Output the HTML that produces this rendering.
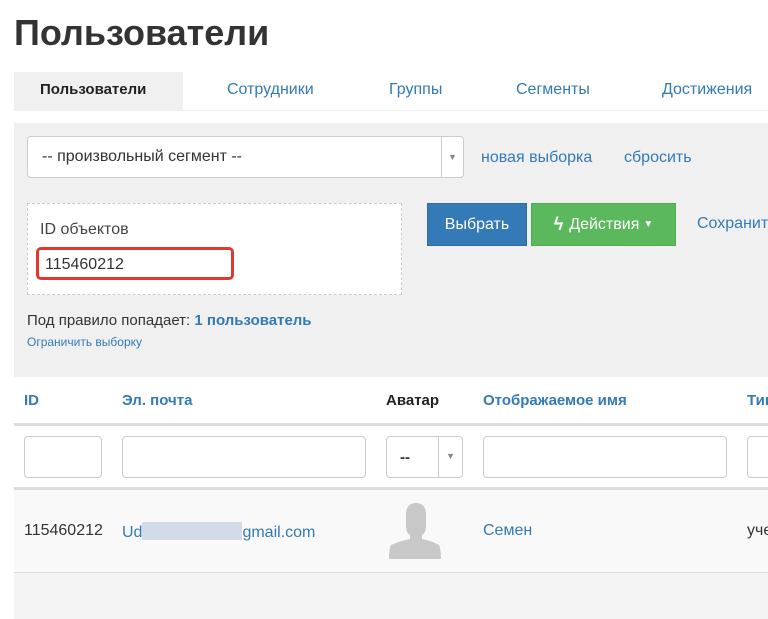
<!DOCTYPE html>
<html><head><meta charset="utf-8"><style>
*{box-sizing:border-box;margin:0;padding:0}
body{width:768px;height:619px;overflow:hidden;background:#fff;font-family:"Liberation Sans",sans-serif;color:#333;position:relative}
.a{position:absolute;white-space:nowrap}
.link{color:#337ab7}
.inp{position:absolute;background:#fff;border:1px solid #ccc;border-radius:4px}
.btn{position:absolute;display:flex;align-items:center;justify-content:center;color:#fff;font-size:16px}
</style></head><body>
<div class="a" style="left:14px;top:12px;font-size:36px;font-weight:bold;color:#333">Пользователи</div>
<div class="a" style="left:14px;top:72px;width:169px;height:38px;background:#f0f0f0"></div>
<div class="a" style="left:14px;top:110px;width:754px;height:1px;background:#eee"></div>
<div class="a" style="left:40px;top:81px;font-size:15px;font-weight:bold;color:#222">Пользователи</div>
<div class="a link" style="left:227px;top:81px;font-size:16px">Сотрудники</div>
<div class="a link" style="left:389px;top:81px;font-size:16px">Группы</div>
<div class="a link" style="left:516px;top:81px;font-size:16px">Сегменты</div>
<div class="a link" style="left:662px;top:81px;font-size:16px">Достижения</div>

<div class="a" style="left:14px;top:123px;width:754px;height:254px;background:#f0f0f0"></div>
<div class="inp" style="left:27px;top:136px;width:437px;height:42px"></div>
<div class="a" style="left:441px;top:137px;width:1px;height:40px;background:#ccc"></div>
<div class="a" style="left:448px;top:152px;font-size:9px;color:#888">▼</div>
<div class="a" style="left:42px;top:148px;font-size:16px;color:#333">-- произвольный сегмент --</div>
<div class="a link" style="left:481px;top:149px;font-size:16px">новая выборка</div>
<div class="a link" style="left:624px;top:149px;font-size:16px">сбросить</div>

<div class="a" style="left:27px;top:203px;width:375px;height:92px;background:#fff;border:1px dashed #ccc"></div>
<div class="a" style="left:40px;top:221px;font-size:16px;color:#444">ID объектов</div>
<div class="a" style="left:36px;top:247px;width:198px;height:33px;border:3px solid #e03a2f;border-radius:5px;background:#fff"></div>
<div class="a" style="left:45px;top:256px;font-size:16px;color:#333">115460212</div>

<div class="btn" style="left:427px;top:203px;width:100px;height:43px;background:#337ab7;border:1px solid #2e6da4">Выбрать</div>
<div class="btn" style="left:531px;top:203px;width:145px;height:43px;background:#5cb85c;border:1px solid #4cae4c"><b style="font-size:18px;margin-right:6px">ϟ</b>Действия <span style="font-size:10px;margin-left:4px">▼</span></div>
<div class="a link" style="left:697px;top:215px;font-size:16px">Сохранить</div>

<div class="a" style="left:27px;top:312px;font-size:15px;color:#333">Под правило попадает: <b class="link">1 пользователь</b></div>
<div class="a link" style="left:27px;top:335px;font-size:12px">Ограничить выборку</div>

<div class="a" style="left:14px;top:377px;width:754px;height:47px;background:#fff"></div>
<div class="a link" style="left:24px;top:392px;font-size:15px;font-weight:bold">ID</div>
<div class="a link" style="left:122px;top:392px;font-size:15px;font-weight:bold">Эл. почта</div>
<div class="a" style="left:386px;top:392px;font-size:15px;font-weight:bold;color:#222">Аватар</div>
<div class="a link" style="left:483px;top:392px;font-size:15px;font-weight:bold">Отображаемое имя</div>
<div class="a link" style="left:747px;top:392px;font-size:15px;font-weight:bold">Тип</div>
<div class="a" style="left:14px;top:423px;width:754px;height:3px;background:#ddd"></div>
<div class="inp" style="left:24px;top:436px;width:78px;height:42px"></div>
<div class="inp" style="left:122px;top:436px;width:244px;height:42px"></div>
<div class="inp" style="left:386px;top:436px;width:77px;height:42px"></div>
<div class="a" style="left:438px;top:437px;width:1px;height:40px;background:#ccc"></div>
<div class="a" style="left:446px;top:451px;font-size:9px;color:#888">▼</div>
<div class="a" style="left:400px;top:449px;font-size:15px;font-weight:bold;color:#333">--</div>
<div class="inp" style="left:483px;top:436px;width:244px;height:42px"></div>
<div class="inp" style="left:747px;top:436px;width:40px;height:42px"></div>
<div class="a" style="left:14px;top:487px;width:754px;height:3px;background:#ddd"></div>
<div class="a" style="left:14px;top:490px;width:754px;height:82px;background:#f9f9f9"></div>
<div class="a" style="left:24px;top:522px;font-size:16px;color:#333">115460212</div>
<div class="a link" style="left:122px;top:522px;font-size:16px">Ud<span style="display:inline-block;width:100px;height:18px;background:#d3dbe8;vertical-align:-3px"></span>gmail.com</div>
<svg class="a" style="left:386px;top:503px" width="60" height="56" viewBox="0 0 60 56"><path d="M20 12 Q20 0 30 0 Q40 0 40 12 L40 22 Q40 30 36 32 L36 36 Q46 38 53 42 Q55 46 55 56 L3 56 Q3 46 5 42 Q14 38 24 36 L24 32 Q20 30 20 22Z" fill="#c8c8c8"/></svg>
<div class="a link" style="left:483px;top:522px;font-size:16px">Семен</div>
<div class="a" style="left:747px;top:522px;font-size:16px;color:#333">уче</div>
<div class="a" style="left:14px;top:572px;width:754px;height:1px;background:#ddd"></div>
<div class="a" style="left:14px;top:573px;width:754px;height:46px;background:#f4f4f4"></div>
</body></html>
